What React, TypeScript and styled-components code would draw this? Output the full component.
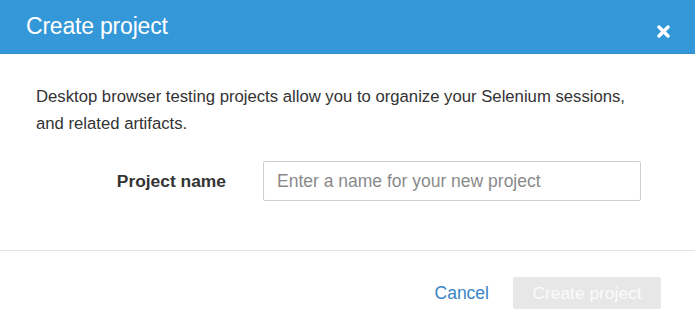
import styled, { createGlobalStyle } from "styled-components";

const Global = createGlobalStyle`
  html, body {
    margin: 0;
    padding: 0;
    background: #fff;
  }
  body {
    font-family: "Liberation Sans", Arial, sans-serif;
    color: #333;
  }
`;

const Modal = styled.div`
  width: 695px;
  height: 333px;
  display: flex;
  flex-direction: column;
  background: #fff;
`;

const Header = styled.header`
  height: 53px;
  flex: none;
  display: flex;
  align-items: center;
  justify-content: space-between;
  padding: 0 24px 0 26px;
  background: #3498d8;
  border-bottom: 1px solid #2f8fcf;
`;

const Title = styled.h2`
  margin: 0;
  font: 400 23px "Liberation Sans", Arial, sans-serif;
  color: #fff;
  letter-spacing: -0.2px;
`;

const Close = styled.button`
  display: grid;
  place-items: center;
  width: 16px;
  height: 16px;
  margin-top: 10px;
  padding: 0;
  border: 0;
  background: none;
  cursor: pointer;
`;

const Body = styled.section`
  flex: none;
  height: 197px;
  padding: 29px 36px 0;
  box-sizing: border-box;
  border-bottom: 1px solid #e3e3e3;
`;

const Intro = styled.p`
  margin: 0;
  font-size: 16.7px;
  line-height: 27px;
  color: #333;
`;

const FormRow = styled.div`
  display: grid;
  grid-template-columns: 190px 378px;
  column-gap: 37px;
  align-items: center;
  margin-top: 24px;
`;

const Label = styled.label`
  text-align: right;
  font: 700 17.4px "Liberation Sans", Arial, sans-serif;
  color: #333;
`;

const Input = styled.input`
  height: 40px;
  box-sizing: border-box;
  padding: 0 13px;
  border: 1px solid #cfcfcf;
  border-radius: 2px;
  font: 400 17.5px "Liberation Sans", Arial, sans-serif;
  color: #333;
  outline: none;

  &::placeholder {
    color: #8a8a8a;
  }
`;

const Footer = styled.footer`
  flex: 1;
  display: flex;
  justify-content: flex-end;
  align-items: center;
  gap: 24px;
  padding: 2px 34px 0 0;
`;

const CancelLink = styled.a`
  font-size: 17.5px;
  color: #3a85c6;
  text-decoration: none;
  cursor: pointer;
`;

const PrimaryButton = styled.button<{ $disabled?: boolean }>`
  width: 148px;
  height: 32px;
  padding: 0;
  border: 0;
  border-radius: 2px;
  background: ${(p) => (p.$disabled ? "#e7e7e7" : "#3498d8")};
  color: ${(p) => (p.$disabled ? "#fbfbfb" : "#fff")};
  font: 400 17.4px "Liberation Sans", Arial, sans-serif;
  cursor: ${(p) => (p.$disabled ? "default" : "pointer")};
`;

export default function App() {
  return (
    <Modal>
      <Global />
      <Header>
        <Title>Create project</Title>
        <Close aria-label="Close">
          <svg width="13" height="13" viewBox="0 0 13 13">
            <path
              d="M2 2 L11 11 M11 2 L2 11"
              stroke="#fff"
              strokeWidth="3.4"
              strokeLinecap="round"
            />
          </svg>
        </Close>
      </Header>
      <Body>
        <Intro>
          Desktop browser testing projects allow you to organize your Selenium sessions,
          <br />
          and related artifacts.
        </Intro>
        <FormRow>
          <Label htmlFor="project-name">Project name</Label>
          <Input id="project-name" placeholder="Enter a name for your new project" />
        </FormRow>
      </Body>
      <Footer>
        <CancelLink>Cancel</CancelLink>
        <PrimaryButton $disabled disabled>
          Create project
        </PrimaryButton>
      </Footer>
    </Modal>
  );
}
